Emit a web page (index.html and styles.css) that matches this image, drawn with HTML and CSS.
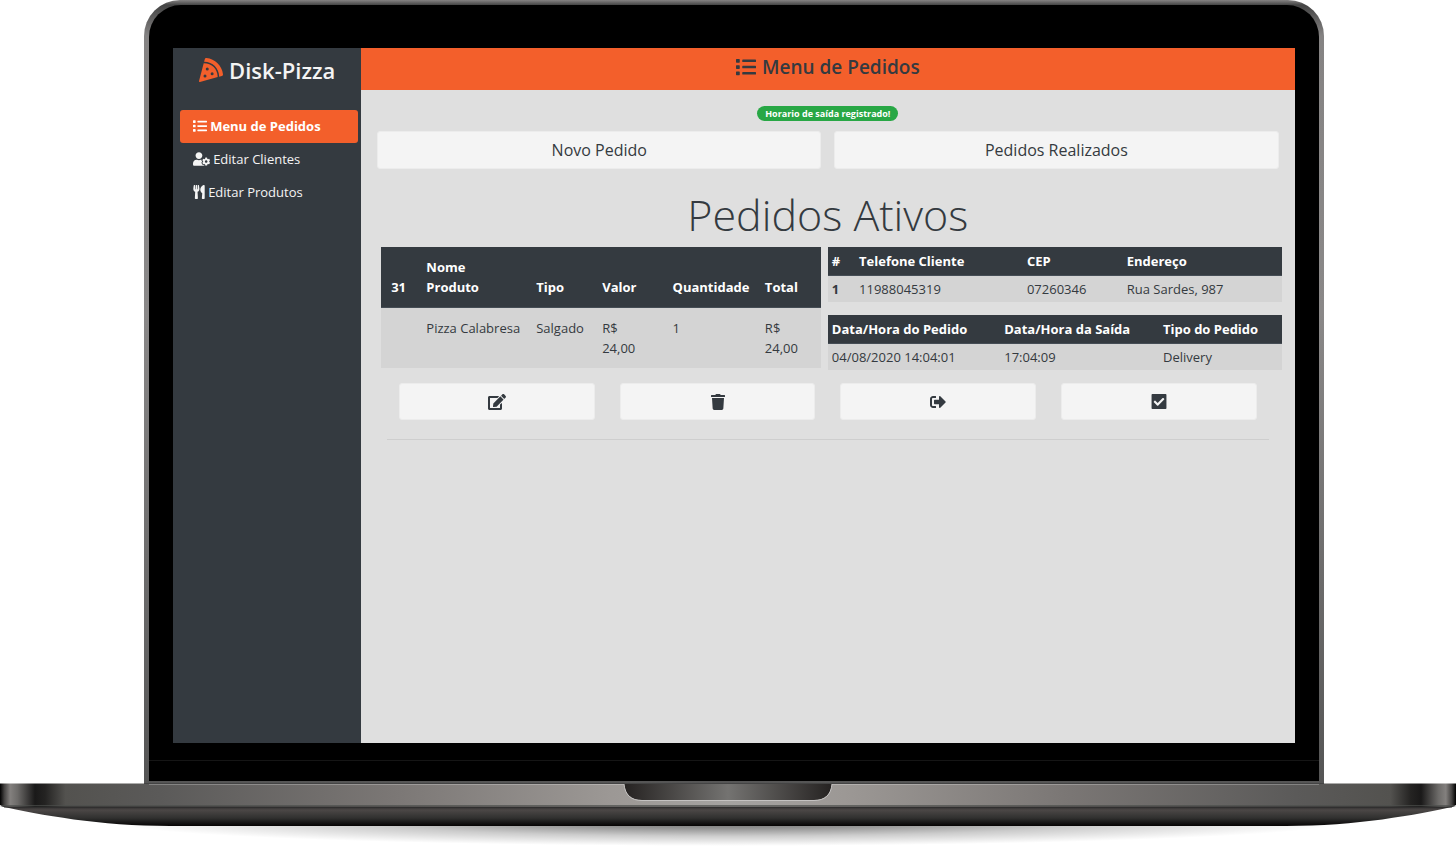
FILE: index.html
```html
<!DOCTYPE html>
<html lang="pt-BR">
<head>
<meta charset="utf-8">
<title>Disk-Pizza</title>
<link rel="stylesheet" href="styles.css">
</head>
<body>
<svg class="sprite" aria-hidden="true">
  <symbol id="list" viewBox="0 0 512 512"><path d="M80 368H16a16 16 0 0 0-16 16v64a16 16 0 0 0 16 16h64a16 16 0 0 0 16-16v-64a16 16 0 0 0-16-16zm0-320H16A16 16 0 0 0 0 64v64a16 16 0 0 0 16 16h64a16 16 0 0 0 16-16V64a16 16 0 0 0-16-16zm0 160H16a16 16 0 0 0-16 16v64a16 16 0 0 0 16 16h64a16 16 0 0 0 16-16v-64a16 16 0 0 0-16-16zm416 176H176a16 16 0 0 0-16 16v32a16 16 0 0 0 16 16h320a16 16 0 0 0 16-16v-32a16 16 0 0 0-16-16zm0-320H176a16 16 0 0 0-16 16v32a16 16 0 0 0 16 16h320a16 16 0 0 0 16-16V80a16 16 0 0 0-16-16zm0 160H176a16 16 0 0 0-16 16v32a16 16 0 0 0 16 16h320a16 16 0 0 0 16-16v-32a16 16 0 0 0-16-16z"/></symbol>
  <symbol id="pizza" viewBox="0 0 512 512"><path d="M158.87.15c-16.16-1.52-31.2 8.42-35.33 24.12l-14.81 56.27c187.62 5.49 314.54 130.61 322.48 317l56.94-15.78c15.72-4.36 25.49-19.68 23.62-35.9C490.89 165.08 340.78 17.32 158.87.15zm-58.47 112L.55 491.64a16.21 16.21 0 0 0 20 19.75l379-105.1c-4.27-174.89-123.08-292.14-299.15-294.1zM128 416a32 32 0 1 1 32-32 32 32 0 0 1-32 32zm48-152a32 32 0 1 1 32-32 32 32 0 0 1-32 32zm104 104a32 32 0 1 1 32-32 32 32 0 0 1-32 32z"/></symbol>
  <symbol id="user-cog" viewBox="0 0 640 512"><path d="M610.5 373.3c2.6-14.1 2.6-28.5 0-42.6l25.8-14.9c3-1.7 4.3-5.2 3.3-8.5-6.7-21.6-18.2-41.2-33.2-57.4-2.3-2.5-6-3.1-9-1.4l-25.8 14.9c-10.9-9.3-23.4-16.5-36.9-21.3v-29.8c0-3.4-2.4-6.4-5.7-7.1-22.3-5-45-4.8-66.2 0-3.3.7-5.7 3.7-5.7 7.1v29.8c-13.5 4.8-26 12-36.9 21.3l-25.8-14.9c-2.9-1.7-6.7-1.1-9 1.4-15 16.2-26.5 35.8-33.2 57.4-1 3.3.4 6.8 3.3 8.5l25.8 14.9c-2.6 14.1-2.6 28.5 0 42.6l-25.8 14.9c-3 1.7-4.3 5.2-3.3 8.5 6.7 21.6 18.2 41.1 33.2 57.4 2.3 2.5 6 3.1 9 1.4l25.8-14.9c10.9 9.3 23.4 16.5 36.9 21.3v29.8c0 3.4 2.4 6.4 5.7 7.1 22.3 5 45 4.8 66.2 0 3.3-.7 5.7-3.7 5.7-7.1v-29.8c13.5-4.8 26-12 36.9-21.3l25.8 14.9c2.9 1.7 6.7 1.1 9-1.4 15-16.2 26.5-35.8 33.2-57.4 1-3.3-.4-6.8-3.3-8.5l-25.8-14.9zM496 400.5c-26.8 0-48.5-21.8-48.5-48.5s21.8-48.5 48.5-48.5 48.5 21.8 48.5 48.5-21.7 48.5-48.5 48.5zM224 256c70.7 0 128-57.3 128-128S294.7 0 224 0 96 57.3 96 128s57.3 128 128 128zm201.2 226.5c-2.3-1.2-4.6-2.6-6.8-3.9l-7.9 4.6c-6 3.4-12.8 5.3-19.6 5.3-10.9 0-21.4-4.6-28.9-12.6-18.3-19.8-32.3-43.9-40.2-69.6-5.5-17.7 1.9-36.4 17.9-45.7l7.9-4.6c-.1-2.6-.1-5.2 0-7.8l-7.9-4.6c-16-9.2-23.4-28-17.9-45.7.9-2.9 2.2-5.8 3.2-8.7-3.8-.3-7.5-1.2-11.4-1.2h-16.7c-22.2 10.2-46.9 16-72.9 16s-50.6-5.8-72.9-16h-16.7C60.2 288 0 348.2 0 422.4V464c0 26.5 21.5 48 48 48h352c10.1 0 19.5-3.2 27.2-8.5-1.2-3.8-2-7.7-2-11.8v-9.2z"/></symbol>
  <symbol id="utensils" viewBox="0 0 416 512"><path d="M207.9 15.2c.8 4.7 16.1 94.5 16.1 128.8 0 52.3-27.8 89.6-68.9 104.6L168 486.7c.7 13.7-10.2 25.3-24 25.3H80c-13.7 0-24.7-11.5-24-25.3l12.9-238.1C27.7 233.6 0 196.2 0 144 0 109.6 15.3 19.9 16.1 15.2 19.3-5.1 61.4-5.4 64 16.3v141.2c1.3 3.4 15.1 3.2 16 0 1.4-25.3 7.9-139.2 8-141.8 3.3-20.8 44.7-20.8 47.9 0 .2 2.7 6.6 116.5 8 141.8.9 3.2 14.8 3.4 16 0V16.3c2.6-21.6 44.8-21.4 48-1.1zm119.2 285.7l-15 185.1c-1.2 14 9.9 26 23.9 26h56c13.3 0 24-10.7 24-24V24c0-13.2-10.7-24-24-24-82.5 0-221.4 178.5-64.9 300.9z"/></symbol>
  <symbol id="edit" viewBox="0 0 576 512"><path d="M402.6 83.2l90.2 90.2c3.8 3.8 3.8 10 0 13.8L274.4 405.6l-92.8 10.3c-12.4 1.4-22.9-9.1-21.5-21.5l10.3-92.8L388.8 83.2c3.8-3.8 10-3.8 13.8 0zm162-22.9l-48.8-48.8c-15.2-15.2-39.9-15.2-55.2 0l-35.4 35.4c-3.8 3.8-3.8 10 0 13.8l90.2 90.2c3.8 3.8 10 3.8 13.8 0l35.4-35.4c15.2-15.3 15.2-40 0-55.2zM384 346.2V448H64V128h229.8c3.2 0 6.2-1.3 8.5-3.5l40-40c7.6-7.6 2.2-20.5-8.5-20.5H48C21.5 64 0 85.5 0 112v352c0 26.5 21.5 48 48 48h352c26.5 0 48-21.5 48-48V306.2c0-10.7-12.9-16-20.5-8.5l-40 40c-2.2 2.3-3.5 5.3-3.5 8.5z"/></symbol>
  <symbol id="trash" viewBox="0 0 448 512"><path d="M432 32H312l-9.4-18.7A24 24 0 0 0 281.1 0H166.8a23.72 23.72 0 0 0-21.4 13.3L136 32H16A16 16 0 0 0 0 48v32a16 16 0 0 0 16 16h416a16 16 0 0 0 16-16V48a16 16 0 0 0-16-16zM53.2 467a48 48 0 0 0 47.9 45h245.8a48 48 0 0 0 47.9-45L416 128H32z"/></symbol>
  <symbol id="exit" viewBox="0 0 512 512"><path d="M497 273L329 441c-15 15-41 4.5-41-17v-96H152c-13.3 0-24-10.7-24-24v-96c0-13.3 10.7-24 24-24h136V88c0-21.4 25.9-32 41-17l168 168c9.3 9.4 9.3 24.6 0 34zM192 436v-40c0-6.6-5.4-12-12-12H96c-17.7 0-32-14.3-32-32V160c0-17.7 14.3-32 32-32h84c6.6 0 12-5.4 12-12V76c0-6.6-5.4-12-12-12H96c-53 0-96 43-96 96v192c0 53 43 96 96 96h84c6.6 0 12-5.4 12-12z"/></symbol>
  <symbol id="check" viewBox="0 0 448 512"><path d="M424 480H24c-14 0-24-10-24-24V56c0-14 10-24 24-24h400c14 0 24 10 24 24v400c0 14-10 24-24 24zm-228.686-98.059l184-184c6.248-6.248 6.248-16.379 0-22.627l-22.627-22.627c-6.248-6.248-16.379-6.249-22.628 0L184 302.745l-70.059-70.059c-6.248-6.248-16.379-6.248-22.628 0l-22.627 22.627c-6.248 6.248-6.248 16.379 0 22.627l104 104c6.249 6.25 16.379 6.25 22.628.001z"/></symbol>
</svg>

<div class="lid">
  <div class="bezel">
    <div class="screen">
      <aside class="sidebar">
        <a class="brand" href="#"><svg class="icon-brand"><use href="#pizza"/></svg>Disk-Pizza</a>
        <nav class="nav">
          <a class="nav-link active" href="#"><svg class="icon"><use href="#list"/></svg>Menu de Pedidos</a>
          <a class="nav-link" href="#"><svg class="icon icon-wide"><use href="#user-cog"/></svg>Editar Clientes</a>
          <a class="nav-link" href="#"><svg class="icon icon-narrow"><use href="#utensils"/></svg>Editar Produtos</a>
        </nav>
      </aside>
      <main class="main">
        <header class="topbar"><svg class="icon-top"><use href="#list"/></svg><h1 class="topbar-title">Menu de Pedidos</h1></header>
        <div class="content">
          <span class="badge" role="status">Horario de saída registrado!</span>
          <div class="switch">
            <button class="btn" type="button">Novo Pedido</button>
            <button class="btn" type="button">Pedidos Realizados</button>
          </div>
          <h2 class="title">Pedidos Ativos</h2>
          <section class="order">
            <table class="table roomy">
              <colgroup><col class="w8"><col class="w25"><col class="w15"><col class="w16"><col class="w21"><col class="w15"></colgroup>
              <thead><tr><th>31</th><th>Nome Produto</th><th>Tipo</th><th>Valor</th><th>Quantidade</th><th>Total</th></tr></thead>
              <tbody><tr><td></td><td>Pizza Calabresa</td><td>Salgado</td><td>R$<br>24,00</td><td>1</td><td>R$<br>24,00</td></tr></tbody>
            </table>
            <div class="details">
              <table class="table">
                <colgroup><col class="w6"><col class="w37"><col class="w22"><col class="w35"></colgroup>
                <thead><tr><th>#</th><th>Telefone Cliente</th><th>CEP</th><th>Endereço</th></tr></thead>
                <tbody><tr><th scope="row">1</th><td>11988045319</td><td>07260346</td><td>Rua Sardes, 987</td></tr></tbody>
              </table>
              <table class="table">
                <colgroup><col class="w38"><col class="w35"><col class="w27"></colgroup>
                <thead><tr><th>Data/Hora do Pedido</th><th>Data/Hora da Saída</th><th>Tipo do Pedido</th></tr></thead>
                <tbody><tr><td>04/08/2020 14:04:01</td><td>17:04:09</td><td>Delivery</td></tr></tbody>
              </table>
            </div>
          </section>
          <div class="actions">
            <button class="btn" type="button" aria-label="Editar"><svg class="icon-action"><use href="#edit"/></svg></button>
            <button class="btn" type="button" aria-label="Excluir"><svg class="icon-action"><use href="#trash"/></svg></button>
            <button class="btn" type="button" aria-label="Registrar saída"><svg class="icon-action"><use href="#exit"/></svg></button>
            <button class="btn" type="button" aria-label="Concluir"><svg class="icon-action icon-check"><use href="#check"/></svg></button>
          </div>
          <hr class="divider">
        </div>
      </main>
    </div>
    <div class="chin"></div>
  </div>
</div>

<svg class="base" viewBox="0 0 1456 64" aria-hidden="true">
  <defs>
    <linearGradient id="deck">
      <stop offset="0" stop-color="#000"/><stop offset=".003" stop-color="#454342"/><stop offset=".007" stop-color="#83807e"/><stop offset=".012" stop-color="#6d6b69"/><stop offset=".024" stop-color="#1a1919"/><stop offset=".031" stop-color="#242322"/><stop offset=".045" stop-color="#53524f"/><stop offset=".11" stop-color="#5b5a59"/><stop offset=".27" stop-color="#7b7775"/><stop offset=".42" stop-color="#9c9895"/><stop offset=".5" stop-color="#a5a3a1"/><stop offset=".58" stop-color="#9c9895"/><stop offset=".73" stop-color="#7b7775"/><stop offset=".89" stop-color="#5b5a59"/><stop offset=".955" stop-color="#53524f"/><stop offset=".969" stop-color="#242322"/><stop offset=".976" stop-color="#1a1919"/><stop offset=".988" stop-color="#6d6b69"/><stop offset=".993" stop-color="#83807e"/><stop offset=".997" stop-color="#454342"/><stop offset="1" stop-color="#000"/>
    </linearGradient>
    <linearGradient id="belly" x2="0" y2="1"><stop offset="0" stop-color="#2a2929"/><stop offset=".2" stop-color="#4b4746"/><stop offset=".6" stop-color="#30302f"/><stop offset="1" stop-color="#050303"/></linearGradient>
    <linearGradient id="notch"><stop offset="0" stop-color="#252221"/><stop offset=".5" stop-color="#747371"/><stop offset="1" stop-color="#252221"/></linearGradient>
    <radialGradient id="shadow"><stop offset="0" stop-color="#000" stop-opacity=".6"/><stop offset=".3" stop-color="#000" stop-opacity=".42"/><stop offset=".6" stop-color="#000" stop-opacity=".2"/><stop offset="1" stop-color="#000" stop-opacity="0"/></radialGradient>
  </defs>
  <ellipse cx="728" cy="38" rx="620" ry="25" fill="url(#shadow)"/>
  <path d="M0 23C40 32 100 43 170 43H1286C1356 43 1416 32 1456 23z" fill="url(#belly)"/>
  <path d="M0 0H1456V22L1452 24H4L0 22z" fill="url(#deck)"/>
  <path d="M0 .5H1456" stroke="#fff" stroke-opacity=".5"/>
  <path d="M144 .5H1324" stroke="#444"/>
  <path d="M149 1.5H1319" stroke="#fff" stroke-opacity=".25"/>
  <path d="M2 22.5H1454" stroke="#4c4f4c" stroke-opacity=".7"/>
  <path d="M4 24H1452" stroke="#2a2b2a"/>
  <path d="M624 1C625 11 631 17 642 17H814C825 17 831 11 832 1z" fill="url(#notch)"/>
  <path d="M624 1C625 12 631 17.500 642 17.500H814C825 17.500 831 12 832 1" fill="none" stroke="#c4c2c1"/>
</svg>
</body>
</html>
```
FILE: styles.css
```css
* { box-sizing: border-box; }
body {
  margin: 0;
  background: #fff;
  color: #343a40;
  font: 13px/20px "Open Sans", "Noto Sans", sans-serif;
  overflow-x: hidden;
}
a { color: inherit; text-decoration: none; }
svg { fill: currentColor; flex: none; }
.sprite { display: none; }

/* Laptop lid */
.lid {
  margin: 0 9.1% 0 9.9%;
  padding: 5px 5px 2px;
  border-radius: 36px 36px 0 0;
  background: linear-gradient(#858383, #444 5px, #858383 36px, #8a8888 40%, #555);
}
.bezel {
  padding: 43px 24px 0;
  border-radius: 32px 32px 0 0;
  background: #000;
}
.screen {
  display: flex;
  aspect-ratio: 1122 / 695;
  background: #dfdfdf;
}
.chin {
  height: 38px;
  margin: 0 -24px;
  background: linear-gradient(#000 17px, #151515 17px, #151515 18px, #000 18px);
}
.base { display: block; width: 100%; height: auto; }

/* Sidebar */
.sidebar {
  flex: 0 0 188px;
  background: #343a40;
  color: #f4f4f4;
}
.brand {
  display: flex;
  align-items: center;
  justify-content: center;
  gap: 6px;
  height: 45px;
  padding-bottom: 2px;
  font-size: 22px;
  font-weight: 600;
}
.icon-brand { width: 24px; height: 24px; color: #f35f2b; }
.nav { padding: 17px 3px 0 7px; }
.nav-link {
  display: flex;
  align-items: center;
  gap: 3px;
  height: 33px;
  padding: 0 13px 2px;
  border-radius: 3px;
}
.nav-link.active { background: #f35f2b; color: #fff; font-weight: 700; }
.icon { width: 14px; height: 14px; }
.icon-wide { width: 17px; }
.icon-narrow { width: 12px; }

/* Main column */
.main { flex: 1; min-width: 0; }
.topbar {
  display: flex;
  align-items: center;
  justify-content: center;
  gap: 6px;
  height: 42px;
  padding-bottom: 4px;
  background: #f35f2b;
}
.icon-top { width: 20px; height: 20px; }
.topbar-title { margin: 0; font-size: 19px; font-weight: 600; }
.content {
  display: flex;
  flex-direction: column;
  padding: 16px;
}
.badge {
  align-self: center;
  padding: 0 8px;
  border-radius: 8px;
  background: #28a745;
  color: #fff;
  font-size: 9px;
  font-weight: 700;
  line-height: 15px;
}
.btn {
  display: flex;
  align-items: center;
  justify-content: center;
  height: 37px;
  padding: 0;
  border: 1px solid #ececec;
  border-radius: 3px;
  background: #f4f4f4;
  color: #343a40;
  font: inherit;
}
.switch {
  display: grid;
  grid-template-columns: 1fr 1fr;
  gap: 13px;
  margin-top: 10px;
}
.switch .btn { height: 38px; font-size: 16px; }
.title {
  margin: 18px 0 4px;
  font-size: 43px;
  font-weight: 300;
  line-height: 56px;
  text-align: center;
}

/* Order tables */
.order {
  display: grid;
  grid-template-columns: 440fr 454fr;
  gap: 7px;
  align-items: start;
  margin: 0 -3px 0 4px;
}
.details { display: grid; gap: 13px; }
.table {
  width: 100%;
  table-layout: fixed;
  border-collapse: separate;
  border-spacing: 0;
  background: #d4d4d4;
}
.table th, .table td {
  padding: 3px 4px;
  text-align: left;
  vertical-align: top;
}
.table thead th {
  padding: 4px;
  border-bottom: 1px solid #454d55;
  background: #343a40;
  color: #fff;
  vertical-align: bottom;
}
.table.roomy thead th { padding: 10px; }
.table.roomy td { padding: 10px; white-space: nowrap; }
.w6 { width: 6%; }
.w8 { width: 8%; }
.w15 { width: 15%; }
.w16 { width: 16%; }
.w21 { width: 21%; }
.w22 { width: 22%; }
.w25 { width: 25%; }
.w27 { width: 27%; }
.w35 { width: 35%; }
.w37 { width: 37%; }
.w38 { width: 38%; }

.actions {
  display: grid;
  grid-template-columns: repeat(4, 1fr);
  gap: 25px;
  margin: 13px 22px 0;
}
.icon-action { width: 18px; height: 16px; }
.icon-check { height: 17px; }
.divider {
  width: auto;
  margin: 19px 10px 0;
  border: 0;
  border-top: 1px solid #cecece;
}
```
